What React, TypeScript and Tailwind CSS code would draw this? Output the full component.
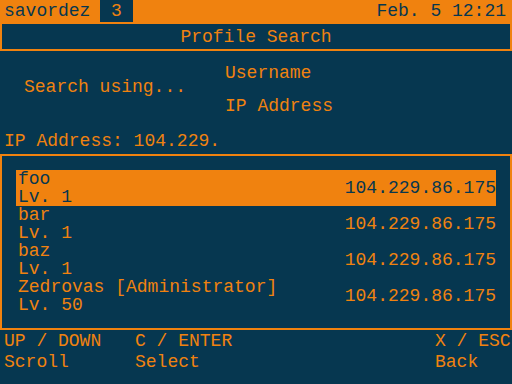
import React from "react";

const rows = [
  { name: "foo", lv: "Lv. 1", ip: "104.229.86.175", sel: true },
  { name: "bar", lv: "Lv. 1", ip: "104.229.86.175", sel: false },
  { name: "baz", lv: "Lv. 1", ip: "104.229.86.175", sel: false },
  { name: "Zedrovas [Administrator]", lv: "Lv. 50", ip: "104.229.86.175", sel: false },
];

export default function App() {
  return (
    <div className="w-[512px] h-[384px] overflow-hidden bg-[#063750] text-[#f0820f] font-['Liberation_Mono','Courier_New',monospace] text-[18px] leading-[18px] whitespace-pre">
      {/* Header */}
      <div className="flex h-[22px] items-center bg-[#f0820f] text-[#063750] pl-[4px] pr-[6px]">
        <span className="w-[96px]">savordez</span>
        <span className="flex h-full w-[33px] items-center justify-center bg-[#063750] text-[#f0820f]">3</span>
        <span className="ml-auto">Feb. 5 12:21</span>
      </div>

      {/* Title */}
      <div className="flex h-[29px] items-center justify-center border-2 border-[#f0820f]">
        Profile Search
      </div>

      {/* Search options */}
      <div className="flex">
        <div className="w-[225px] pl-[24px] pt-[27px]">Search using...</div>
        <div className="flex flex-col gap-[15px] pt-[13px]">
          <span>Username</span>
          <span>IP Address</span>
        </div>
      </div>
      <div className="mt-[17px] pl-[4px]">IP Address: 104.229.</div>

      {/* Result list */}
      <div className="mt-[4px] h-[176px] border-2 border-[#f0820f] p-[14px]">
        {rows.map((r) => (
          <div
            key={r.name}
            className={
              r.sel
                ? "flex h-[36px] items-center bg-[#f0820f] text-[#063750] pl-[2px]"
                : "flex h-[36px] items-center pl-[2px]"
            }
          >
            <div className="flex flex-col">
              <span>{r.name}</span>
              <span>{r.lv}</span>
            </div>
            <span className="ml-auto">{r.ip}</span>
          </div>
        ))}
      </div>

      {/* Footer */}
      <div className="flex pt-[2px] pl-[4px]">
        <div className="flex w-[131px] flex-col gap-[3px]">
          <span>UP / DOWN</span>
          <span>Scroll</span>
        </div>
        <div className="flex w-[300px] flex-col gap-[3px]">
          <span>C / ENTER</span>
          <span>Select</span>
        </div>
        <div className="flex flex-col gap-[3px]">
          <span>X / ESC</span>
          <span>Back</span>
        </div>
      </div>
    </div>
  );
}
